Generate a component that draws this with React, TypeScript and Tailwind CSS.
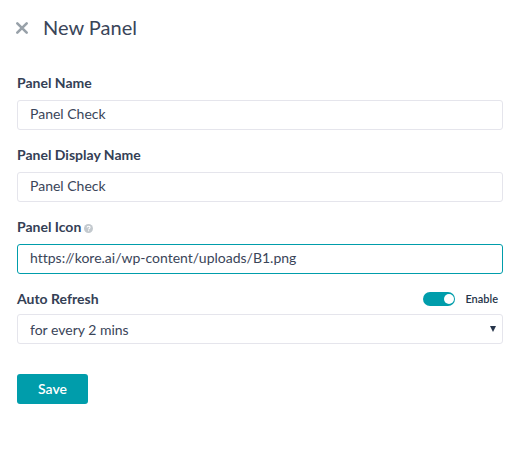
import { useState, type ReactNode } from "react";

const labelClass = "text-sm leading-5 font-bold text-[#344055]";
const controlClass =
  "h-[30px] w-full rounded-[3px] border border-[#e5e5ec] bg-white px-3 text-sm text-[#3a4559] outline-none focus:border-[#009dab]";

function HelpIcon() {
  return (
    <svg viewBox="0 0 9 9" className="mt-[2px] size-[9px]" aria-hidden="true">
      <circle cx="4.5" cy="4.5" r="4.5" fill="#c3c9ce" />
      <path d="M3.1 3.6C3.1 1.8 6 1.8 6 3.5C6 4.5 4.6 4.4 4.6 5.4M4.6 6.2V7.2" fill="none" stroke="#fff" strokeWidth="1.1" />
    </svg>
  );
}

function TextField({
  id,
  label,
  initial,
  active = false,
  help,
}: {
  id: string;
  label: string;
  initial: string;
  active?: boolean;
  help?: ReactNode;
}) {
  const [value, setValue] = useState(initial);
  return (
    <div className="flex flex-col gap-[7px]">
      <div className="flex items-center gap-[3px]">
        <label htmlFor={id} className={labelClass}>
          {label}
        </label>
        {help}
      </div>
      <input
        id={id}
        type="text"
        value={value}
        onChange={(e) => setValue(e.target.value)}
        className={active ? `${controlClass} border-[#009dab]! pb-[3px]` : `${controlClass} pb-[3px]`}
      />
    </div>
  );
}

export default function App() {
  const [enabled, setEnabled] = useState(true);
  const [interval, setInterval] = useState("2");

  return (
    <main className="min-h-screen bg-white pt-[11px] pr-5 pb-8 pl-[17px] font-['Lato',sans-serif] text-[#26344a] [font-variant-ligatures:none]">
      <header className="flex items-center gap-[14px]">
        <button type="button" aria-label="Close">
          <svg viewBox="0 0 12 12" className="size-3 overflow-visible" aria-hidden="true">
            <path d="M0.3 2.3L9.7 11.7M9.7 2.3L0.3 11.7" stroke="#98a1a9" strokeWidth="2.6" strokeLinecap="round" />
          </svg>
        </button>
        <h1 className="text-xl leading-8 text-[#3a4559]">New Panel</h1>
      </header>

      <form className="mt-[30px]" onSubmit={(e) => e.preventDefault()}>
        <div className="flex flex-col gap-[15px]">
          <TextField id="name" label="Panel Name" initial="Panel Check" />
          <TextField id="display-name" label="Panel Display Name" initial="Panel Check" />
          <TextField
            id="icon"
            label="Panel Icon"
            initial="https://kore.ai/wp-content/uploads/B1.png"
            active
            help={<HelpIcon />}
          />
          <div className="flex flex-col gap-[5px]">
            <div className="flex items-center justify-between">
              <label htmlFor="refresh" className={labelClass}>
                Auto Refresh
              </label>
              <label className="flex items-center gap-[10px] pr-[5px] text-[11px] leading-5 font-semibold">
                <input
                  type="checkbox"
                  role="switch"
                  checked={enabled}
                  onChange={(e) => setEnabled(e.target.checked)}
                  className="flex h-[14px] w-8 appearance-none items-center rounded-full bg-[#c3c9ce] px-px before:size-[10px] before:rounded-full before:bg-white checked:justify-end checked:bg-[#009dab]"
                />
                Enable
              </label>
            </div>
            <div className="relative">
              <select
                id="refresh"
                value={interval}
                onChange={(e) => setInterval(e.target.value)}
                className={`${controlClass} appearance-none pt-[2px]`}
              >
                <option value="2">for every 2 mins</option>
                <option value="5">for every 5 mins</option>
                <option value="10">for every 10 mins</option>
              </select>
              <svg
                viewBox="0 0 6 6"
                className="pointer-events-none absolute top-3 right-[7px] size-[6px]"
                aria-hidden="true"
              >
                <path d="M0 0H6L3 6Z" fill="#26344a" />
              </svg>
            </div>
          </div>
        </div>
        <button
          type="submit"
          className="mt-[30px] h-[30px] rounded-[3px] bg-[#009dab] px-[21px] text-sm font-semibold text-white"
        >
          Save
        </button>
      </form>
    </main>
  );
}
